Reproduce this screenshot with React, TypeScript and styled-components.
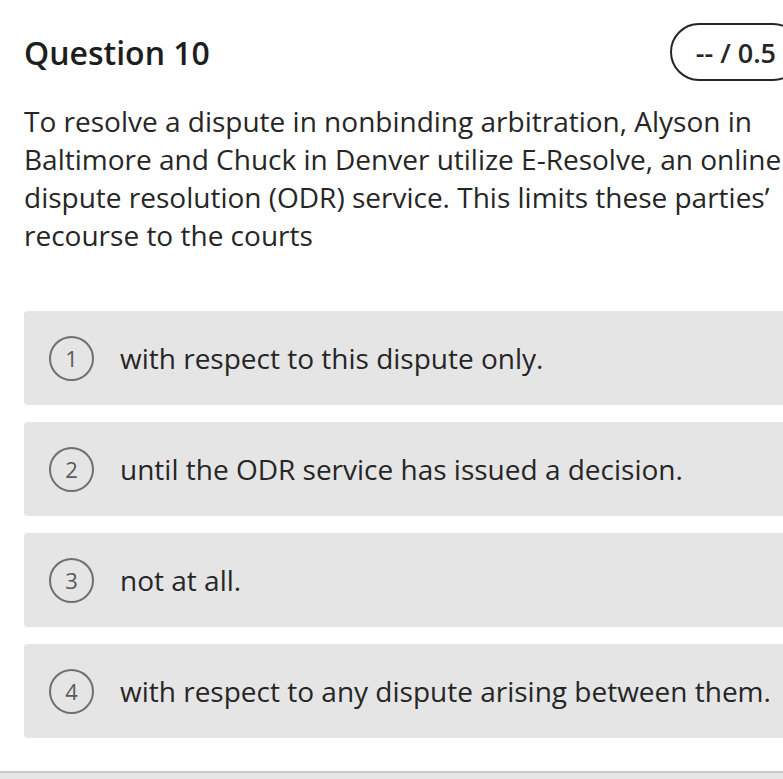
import React from "react";
import styled, { createGlobalStyle } from "styled-components";

const GlobalStyle = createGlobalStyle`
  html, body {
    margin: 0;
    padding: 0;
    background: #ffffff;
    overflow: hidden;
  }
  body {
    font-family: "Open Sans", "Noto Sans", sans-serif;
    color: #262626;
  }
`;

const Page = styled.div`
  width: 783px;
  height: 779px;
  overflow: hidden;
  display: flex;
  flex-direction: column;
`;

const Content = styled.div`
  width: 778px;
  padding: 23px 0 0 24px;
  flex: 1;
`;

const Header = styled.div`
  display: flex;
  align-items: center;
  justify-content: space-between;
  height: 58px;
`;

const Title = styled.h2`
  margin: 0;
  font-size: 32px;
  font-weight: 600;
  color: #1e1e1e;
`;

const Score = styled.div`
  height: 58px;
  box-sizing: border-box;
  border: 2px solid #262626;
  border-radius: 29px;
  padding: 0 24px;
  display: flex;
  align-items: center;
  font-size: 27px;
  font-weight: 600;
  color: #262626;
`;

const Prompt = styled.p`
  margin: 21px 0 0;
  font-size: 28px;
  line-height: 38px;
  color: #262626;
`;

const Options = styled.div`
  margin-top: 57px;
  display: flex;
  flex-direction: column;
  gap: 17px;
`;

const Option = styled.div`
  height: 94px;
  box-sizing: border-box;
  background: #e5e5e5;
  border-radius: 4px;
  display: flex;
  align-items: center;
  padding-left: 25px;
  gap: 26px;
`;

const Badge = styled.span`
  width: 45px;
  height: 45px;
  box-sizing: border-box;
  border: 2px solid #707070;
  border-radius: 50%;
  display: flex;
  align-items: center;
  justify-content: center;
  font-size: 22px;
  color: #5a5a5a;
  flex-shrink: 0;
`;

const OptionText = styled.span`
  font-size: 28px;
  color: #262626;
  white-space: nowrap;
`;

const Footer = styled.div`
  height: 6px;
  border-top: 2px solid #c8c8c8;
  background: #e6e6e6;
`;

const answers = [
  "with respect to this dispute only.",
  "until the ODR service has issued a decision.",
  "not at all.",
  "with respect to any dispute arising between them.",
];

export default function App() {
  return (
    <Page>
      <GlobalStyle />
      <Content>
        <Header>
          <Title>Question 10</Title>
          <Score>-- / 0.5</Score>
        </Header>
        <Prompt>
          To resolve a dispute in nonbinding arbitration, Alyson in Baltimore
          and Chuck in Denver utilize E-Resolve, an online dispute resolution
          (ODR) service. This limits these parties’ recourse to the courts
        </Prompt>
        <Options>
          {answers.map((a, i) => (
            <Option key={i}>
              <Badge>{i + 1}</Badge>
              <OptionText>{a}</OptionText>
            </Option>
          ))}
        </Options>
      </Content>
      <Footer />
    </Page>
  );
}
